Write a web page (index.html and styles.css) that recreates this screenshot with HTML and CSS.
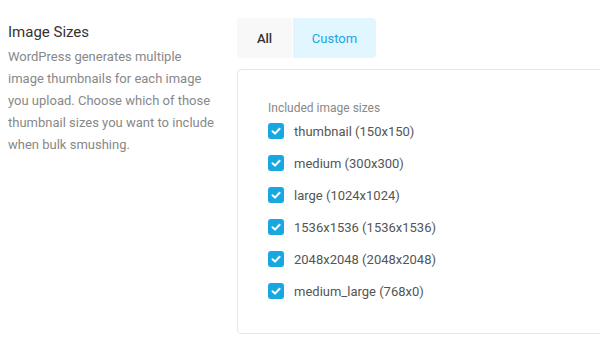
FILE: index.html
```html
<!DOCTYPE html>
<html>
<head>
<meta charset="utf-8">
<link rel="stylesheet" href="styles.css">
</head>
<body>
<div class="row">
  <div class="label-col">
    <h3 class="title">Image Sizes</h3>
    <p class="desc">WordPress generates multiple image thumbnails for each image you upload. Choose which of those thumbnail sizes you want to include when bulk smushing.</p>
  </div>
  <div class="content-col">
    <div class="tabs">
      <div class="tab">All</div>
      <div class="tab active">Custom</div>
    </div>
    <div class="panel">
      <div class="panel-label">Included image sizes</div>
      <ul class="list">
        <li class="item"><span class="check"><svg viewBox="0 0 16 16" width="16" height="16"><path d="M4.5 8.2 L7 10.6 L11.6 5.8" fill="none" stroke="#fff" stroke-width="2" stroke-linecap="round" stroke-linejoin="round"/></svg></span>thumbnail (150x150)</li>
        <li class="item"><span class="check"><svg viewBox="0 0 16 16" width="16" height="16"><path d="M4.5 8.2 L7 10.6 L11.6 5.8" fill="none" stroke="#fff" stroke-width="2" stroke-linecap="round" stroke-linejoin="round"/></svg></span>medium (300x300)</li>
        <li class="item"><span class="check"><svg viewBox="0 0 16 16" width="16" height="16"><path d="M4.5 8.2 L7 10.6 L11.6 5.8" fill="none" stroke="#fff" stroke-width="2" stroke-linecap="round" stroke-linejoin="round"/></svg></span>large (1024x1024)</li>
        <li class="item"><span class="check"><svg viewBox="0 0 16 16" width="16" height="16"><path d="M4.5 8.2 L7 10.6 L11.6 5.8" fill="none" stroke="#fff" stroke-width="2" stroke-linecap="round" stroke-linejoin="round"/></svg></span>1536x1536 (1536x1536)</li>
        <li class="item"><span class="check"><svg viewBox="0 0 16 16" width="16" height="16"><path d="M4.5 8.2 L7 10.6 L11.6 5.8" fill="none" stroke="#fff" stroke-width="2" stroke-linecap="round" stroke-linejoin="round"/></svg></span>2048x2048 (2048x2048)</li>
        <li class="item"><span class="check"><svg viewBox="0 0 16 16" width="16" height="16"><path d="M4.5 8.2 L7 10.6 L11.6 5.8" fill="none" stroke="#fff" stroke-width="2" stroke-linecap="round" stroke-linejoin="round"/></svg></span>medium_large (768x0)</li>
      </ul>
    </div>
  </div>
</div>
</body>
</html>
```

FILE: styles.css
```css
html, body {
  margin: 0;
  padding: 0;
  background: #fff;
  overflow: hidden;
}
body {
  font-family: Roboto, "Liberation Sans", sans-serif;
  color: #333;
}
.row {
  display: flex;
  padding: 18px 0 0 8px;
}
.label-col {
  width: 229px;
  flex: none;
}
.title {
  margin: 3px 0 0;
  font-size: 15px;
  line-height: 22px;
  font-weight: 400;
  color: #333;
}
.desc {
  margin: 3px 0 0;
  width: 206px;
  font-size: 13px;
  line-height: 22px;
  color: #888;
}
.content-col {
  flex: 1;
  margin-right: -20px;
}
.tabs {
  display: inline-flex;
  border-radius: 4px;
  overflow: hidden;
  height: 40px;
}
.tab {
  display: flex;
  align-items: center;
  justify-content: center;
  font-size: 13px;
  font-weight: 500;
  background: #f8f8f8;
  color: #333;
  width: 55px;
}
.tab.active {
  background: #e1f6ff;
  color: #17a8e3;
  width: 83px;
  margin-left: 1px;
  font-weight: 400;
}
.panel {
  margin-top: 11px;
  border: 1px solid #e6e6e6;
  border-radius: 4px;
  height: 265px;
  padding: 30px 30px 0;
  box-sizing: border-box;
}
.panel-label {
  font-size: 12px;
  line-height: 16px;
  color: #888;
  margin-top: 0;
}
.list {
  list-style: none;
  margin: -1px 0 0;
  padding: 0;
}
.item {
  display: flex;
  align-items: center;
  height: 32px;
  font-size: 13px;
  font-weight: 400;
  color: #555;
}
.check {
  width: 16px;
  height: 16px;
  border-radius: 3px;
  background: #17a8e3;
  margin-right: 10px;
  display: flex;
}
```
